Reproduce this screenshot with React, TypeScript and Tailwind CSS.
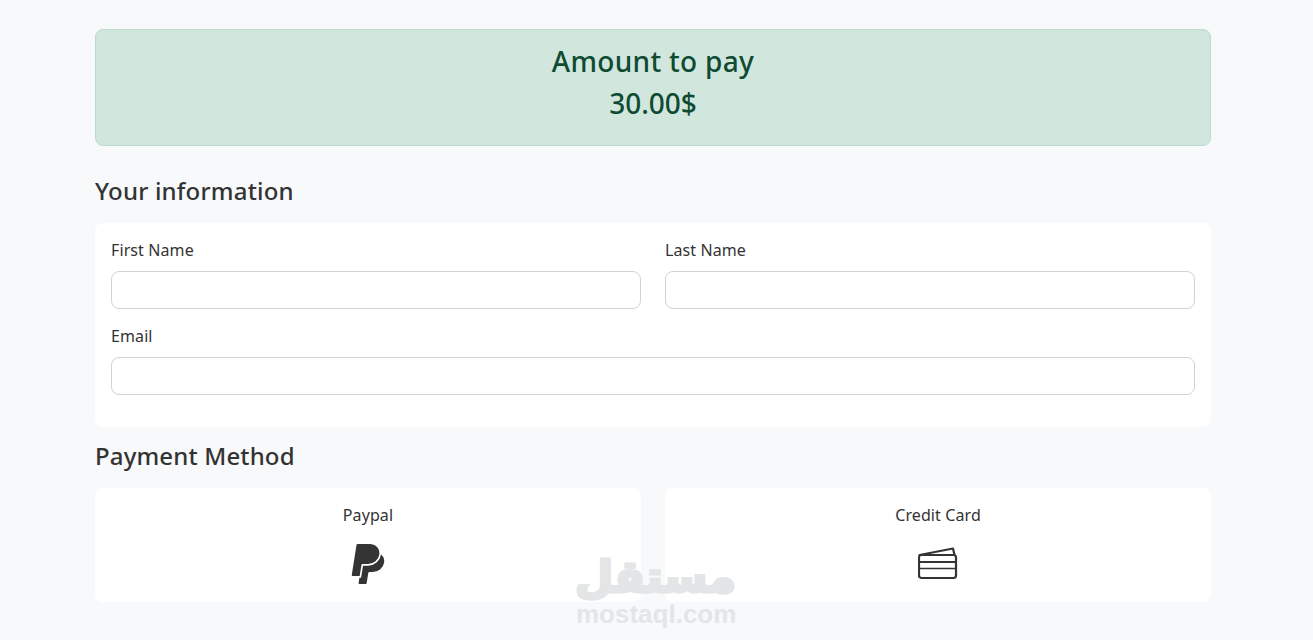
import { SiPaypal } from "react-icons/si";

function CardIcon() {
  return (
    <svg width="40" height="34" viewBox="0 0 40 34" fill="none" stroke="#343434" strokeWidth="2.2" strokeLinejoin="round" strokeLinecap="round">
      <rect x="1" y="8" width="37" height="23" rx="2.5" />
      <path d="M1.5 8 35 1.5 36.5 8" />
      <path d="M1 15h37" />
      <path d="M1 21.5h37" strokeWidth="1.5" />
    </svg>
  );
}

function Field({ label, className }: { label: string; className?: string }) {
  return (
    <div className={className}>
      <label className="block text-[16px] leading-[22px] tracking-[0.1px] mb-[10px] text-[#333]">{label}</label>
      <input className="block w-full h-[38px] rounded-lg border border-[#ced4da] bg-white" />
    </div>
  );
}

function MethodCard({ title, children }: { title: string; children: React.ReactNode }) {
  return (
    <div className="flex-1 h-[114px] rounded-lg bg-white flex flex-col items-center pt-[16px]">
      <div className="text-[16px] leading-[22px] tracking-[0.1px] text-[#333]">{title}</div>
      <div className="h-[40px] mt-[18px] flex items-center justify-center">{children}</div>
    </div>
  );
}

export default function App() {
  return (
    <div className="relative h-[640px] overflow-hidden bg-[#f8f9fa] font-['Noto_Sans',sans-serif]">
      <div className="ml-[95px] w-[1116px] pt-[29px]">
        {/* Amount */}
        <div className="h-[117px] rounded-lg border border-[#badbcc] bg-[#d1e7dd] text-[#0f4b32] text-center pt-[10px]">
          <div className="text-[28px] leading-[42px] font-medium tracking-[0.3px]">Amount to pay</div>
          <div className="text-[28px] leading-[42px] font-medium">30.00$</div>
        </div>

        <h2 className="mt-[28px] text-[24px] leading-[34px] font-medium tracking-[0.2px] text-[#333]">Your information</h2>

        {/* Form */}
        <div className="mt-[15px] h-[204px] rounded-lg bg-white px-4 pt-[16px]">
          <div className="flex gap-6">
            <Field label="First Name" className="flex-1" />
            <Field label="Last Name" className="flex-1" />
          </div>
          <Field label="Email" className="mt-[16px]" />
        </div>

        <h2 className="mt-[12px] text-[24px] leading-[34px] font-medium tracking-[0.15px] text-[#333]">Payment Method</h2>

        <div className="mt-[15px] flex gap-6">
          <MethodCard title="Paypal">
            <SiPaypal size={40} className="text-[#343434]" />
          </MethodCard>
          <MethodCard title="Credit Card">
            <CardIcon />
          </MethodCard>
        </div>
      </div>

      {/* mostaql watermark */}
      <div className="absolute left-[576px] top-[550px] w-[160px] text-center text-[#e3e5e7] font-bold pointer-events-none">
        <div dir="rtl" className="font-['DejaVu_Sans',sans-serif] text-[44px] leading-[54px] [-webkit-text-stroke:3px_#e3e5e7]">مستقل</div>
        <div className="font-['Liberation_Sans',sans-serif] text-[26px] leading-[20px]">mostaql.com</div>
      </div>
    </div>
  );
}
